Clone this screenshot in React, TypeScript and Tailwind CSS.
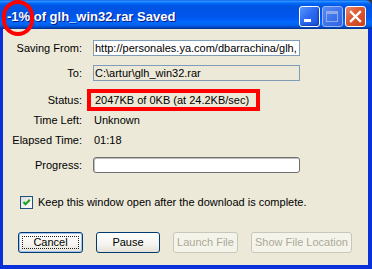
import React from "react";

function TitleButtons() {
  return (
    <div className="flex gap-[2px]">
      {/* minimize */}
      <div className="relative w-[21px] h-[21px] rounded-[3px] border border-white bg-[linear-gradient(135deg,#5A97FF_0%,#2D6BF0_45%,#1A55DA_100%)] shadow-[inset_-1px_-1px_2px_rgba(0,30,140,0.5)]">
        <div className="absolute left-[4px] top-[12px] w-[7px] h-[3px] bg-white" />
      </div>
      {/* maximize (disabled look) */}
      <div className="relative w-[21px] h-[21px] rounded-[3px] border border-[#9DB6F2] bg-[linear-gradient(135deg,#5C8DF2_0%,#3F74EC_50%,#3464E0_100%)]">
        <div className="absolute left-[3px] top-[4px] w-[12px] h-[11px] border border-[#8FAAEF] border-t-[3px]" />
      </div>
      {/* close */}
      <div className="relative w-[21px] h-[21px] rounded-[3px] border border-white bg-[linear-gradient(135deg,#E98A6C_0%,#DE5A35_40%,#C8401C_100%)]">
        <svg className="absolute left-0 top-0" width="19" height="19" viewBox="0 0 19 19">
          <path d="M5 5 L14 14 M14 5 L5 14" stroke="white" strokeWidth="2.4" strokeLinecap="square" />
        </svg>
      </div>
    </div>
  );
}

function Row({ label, children, h, mt }: { label: string; children: React.ReactNode; h: string; mt: string }) {
  return (
    <div className={`flex items-center ${h} ${mt}`}>
      <div className="w-[79px] text-right whitespace-nowrap">{label}</div>
      <div className="ml-[11px] w-[207px] h-full flex items-center">{children}</div>
    </div>
  );
}

export default function App() {
  return (
    <div className="w-[372px] h-[269px] bg-[#3a3a3a] font-['Liberation_Sans',Arial,sans-serif]">
      <div className="relative w-full h-full flex flex-col rounded-tr-[7px] overflow-hidden bg-[#0831D9]">
        {/* title bar */}
        <div className="h-[29px] shrink-0 flex items-center pt-[4px] pl-[7px] pr-[6px] bg-[linear-gradient(180deg,#0058EE_0%,#3593FF_4%,#288EFF_6%,#127DFF_8%,#036FFC_10%,#0262EE_14%,#0057E5_20%,#0054E3_24%,#0055EB_56%,#005BF5_66%,#026AFE_76%,#0062EF_86%,#0052D6_92%,#0040AB_96%,#003092_100%)]">
          <span className="flex-1 text-white font-bold text-[13px] leading-[13px] whitespace-nowrap [text-shadow:1px_1px_0_#0A1883]">
            -1% of glh_win32.rar Saved
          </span>
          <TitleButtons />
        </div>

        {/* body */}
        <div className="flex-1 ml-[3px] mr-[4px] mb-[4px] bg-[#ECE9D8] text-[11px] leading-[13px] text-black flex flex-col">
          <div className="pt-[11px] flex flex-col">
            <Row label="Saving From:" h="h-[16px]" mt="mt-0">
              <div className="w-full h-full border border-[#7F9DB9] bg-white pl-[1px] overflow-hidden whitespace-nowrap flex items-center">
                http://personales.ya.com/dbarrachina/glh,
              </div>
            </Row>
            <Row label="To:" h="h-[16px]" mt="mt-[9px]">
              <div className="w-full h-full border border-[#7F9DB9] bg-[#ECE9D8] pl-[1px] overflow-hidden whitespace-nowrap flex items-center">
                C:\artur\glh_win32.rar
              </div>
            </Row>
            <Row label="Status:" h="h-[20px]" mt="mt-[9px]">
              <span className="pl-[2px] whitespace-nowrap">2047KB of 0KB (at 24.2KB/sec)</span>
            </Row>
            <Row label="Time Left:" h="h-[20px]" mt="mt-0">
              <span className="pl-[1px]">Unknown</span>
            </Row>
            <Row label="Elapsed Time:" h="h-[20px]" mt="mt-0">
              <span className="pl-[1px]">01:18</span>
            </Row>
            <Row label="Progress:" h="h-[16px]" mt="mt-[7px]">
              <div className="w-full h-full rounded-[3px] border border-[#6F6F6F] bg-white shadow-[inset_1px_1px_0_#BDBDBD]" />
            </Row>
          </div>

          {/* checkbox */}
          <div className="mt-[23px] pl-[17px] flex items-center h-[13px]">
            <div className="w-[13px] h-[13px] border border-[#1C5180] bg-[linear-gradient(135deg,#DCDCD7_0%,#FFFFFF_100%)] flex items-center justify-center">
              <svg width="11" height="11" viewBox="0 0 11 11">
                <path d="M2.5 5 L4.5 7.2 L8.8 2.8" fill="none" stroke="#21A121" strokeWidth="2" />
              </svg>
            </div>
            <span className="ml-[5px] whitespace-nowrap">Keep this window open after the download is complete.</span>
          </div>

          {/* buttons */}
          <div className="mt-[23px] pl-[15px] flex gap-[13px]">
            <div className="relative w-[65px] h-[21px] rounded-[3px] border border-[#003C74] bg-[linear-gradient(180deg,#FFFFFF_0%,#F4F3EE_60%,#E5E1D6_100%)] shadow-[inset_0_0_0_1px_#A6C1F2] flex items-center justify-center">
              <div className="absolute inset-[3px] border border-dotted border-[#222]" />
              <span className="relative">Cancel</span>
            </div>
            <div className="w-[64px] h-[21px] rounded-[3px] border border-[#003C74] bg-[linear-gradient(180deg,#FFFFFF_0%,#F4F3EE_60%,#E5E1D6_100%)] flex items-center justify-center">
              Pause
            </div>
            <div className="w-[65px] h-[21px] rounded-[3px] border border-[#C9C7BA] bg-[#F5F4EA] text-[#ACA899] flex items-center justify-center">
              Launch File
            </div>
            <div className="w-[101px] h-[21px] rounded-[3px] border border-[#C9C7BA] bg-[#F5F4EA] text-[#ACA899] flex items-center justify-center">
              Show File Location
            </div>
          </div>
        </div>

        {/* red annotations */}
        <div className="absolute left-[2px] top-0 w-[32px] h-[36px] rounded-full border-[4px] border-[#FF0000]" />
        <div className="absolute left-[87px] top-[89px] w-[173px] h-[22px] border-[4px] border-[#FF0000]" />
      </div>
    </div>
  );
}
